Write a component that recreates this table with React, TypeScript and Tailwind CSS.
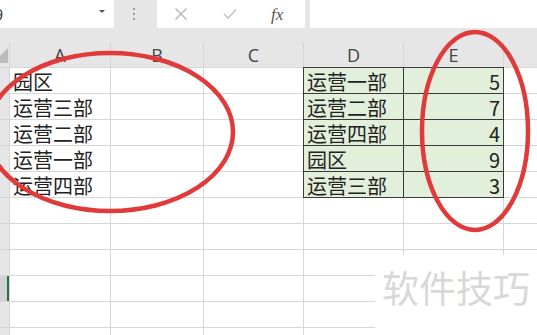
import React from 'react';

const colA = ['园区', '运营三部', '运营二部', '运营一部', '运营四部'];
const tableD: [string, number][] = [
    ['运营一部', 5],
    ['运营二部', 7],
    ['运营四部', 4],
    ['园区', 9],
    ['运营三部', 3],
];
const letters = ['A', 'B', 'C', 'D', 'E', ''];
const cjk = { fontFamily: '"Noto Sans CJK SC", "Noto Sans", sans-serif' };

const FormulaBar: React.FC = () => (
    <div className="flex h-[28px] bg-[#e6e6e6]">
        <div className="relative w-[114px] bg-white overflow-hidden">
            <span className="absolute left-[-6px] top-[3px] text-[16px] text-[#333]" style={{ fontFamily: '"Open Sans", sans-serif' }}>9</span>
            <span className="absolute left-[99px] top-[10px] w-0 h-0 border-l-[3px] border-r-[3px] border-t-[3px] border-l-transparent border-r-transparent border-t-[#555]" />
        </div>
        <div className="w-[43px] flex flex-col items-center justify-center gap-[3px] pr-[4px]">
            <span className="w-[2px] h-[2px] bg-[#9a9a9a]" />
            <span className="w-[2px] h-[2px] bg-[#9a9a9a]" />
            <span className="w-[2px] h-[2px] bg-[#9a9a9a]" />
        </div>
        <div className="w-[148px] bg-white relative">
            <svg className="absolute top-[7px]" style={{ left: 17 }} width="14" height="14" viewBox="0 0 14 14">
                <path d="M1.5 1.5 L12.5 12.5 M12.5 1.5 L1.5 12.5" stroke="#b4b4b4" strokeWidth="1.3" fill="none" />
            </svg>
            <svg className="absolute top-[8px]" style={{ left: 66 }} width="14" height="12" viewBox="0 0 14 12">
                <path d="M1 6 L5 10 L13 1.5" stroke="#c4c4c4" strokeWidth="1.6" fill="none" />
            </svg>
            <span className="absolute top-[2px] left-[114px] text-[17px] italic text-[#555]" style={{ fontFamily: '"Liberation Serif", serif' }}>fx</span>
        </div>
        <div className="w-[5px]" />
        <div className="flex-1 bg-white" />
    </div>
);

const App: React.FC = () => {
    const rows = Array.from({ length: 11 }, (_, i) => i);
    return (
        <div className="relative w-[537px] h-[335px] overflow-hidden bg-white">
            <FormulaBar />
            <div className="h-[14px] bg-[#e6e6e6]" />
            <div className="grid grid-cols-[9px_100px_92px_99px_99px_99px_1fr] grid-rows-[25px] auto-rows-[25px] gap-px bg-[#d6d6d6]">
                {/* header row */}
                <div className="relative bg-[#e6e6e6] overflow-hidden">
                    <svg className="absolute left-0 top-0" width="9" height="25" viewBox="0 0 9 25">
                        <polygon points="8,6 8,21 -7,21" fill="#bcbcbc" />
                    </svg>
                </div>
                {letters.map((l, i) => (
                    <div key={i} className="bg-[#e6e6e6] flex items-end justify-center pb-[1px] text-[18px] leading-[22px] text-[#444]" style={{ fontFamily: '"Open Sans", sans-serif' }}>
                        {l}
                    </div>
                ))}
                {rows.map((r) => (
                    <React.Fragment key={r}>
                        <div className={r === 8 ? 'bg-[#d2d2d2] border-r-2 border-[#217346]' : 'bg-[#e6e6e6]'} />
                        <div className="bg-white flex items-end pl-[3px] text-[20px] leading-[23px] text-[#222]" style={cjk}>
                            {colA[r] ?? ''}
                        </div>
                        <div className="bg-white" />
                        <div className="bg-white" />
                        {r === 0 ? (
                            <div className="col-span-2 row-span-5 -m-px p-px grid grid-cols-[99px_99px] auto-rows-[25px] gap-px bg-[#3a3a3a]">
                                {tableD.map(([name, n]) => (
                                    <React.Fragment key={name}>
                                        <div className="bg-[#e2efda] flex items-end pl-[3px] text-[20px] leading-[23px] text-[#222]" style={cjk}>{name}</div>
                                        <div className="bg-[#e2efda] flex items-end justify-end pr-[3px] text-[20px] leading-[23px] text-[#222]" style={cjk}>{n}</div>
                                    </React.Fragment>
                                ))}
                            </div>
                        ) : r < 5 ? null : (
                            <>
                                <div className="bg-white" />
                                <div className="bg-white" />
                            </>
                        )}
                        <div className="bg-white" />
                    </React.Fragment>
                ))}
            </div>

            <svg className="absolute inset-0 pointer-events-none" width="537" height="335" viewBox="0 0 537 335">
                <ellipse cx="110" cy="132" rx="123" ry="79" fill="none" stroke="#e03a3a" strokeWidth="4.5" />
                <ellipse cx="475" cy="131" rx="53" ry="99" fill="none" stroke="#e03a3a" strokeWidth="4.5" />
            </svg>

            <div className="absolute left-[375px] top-[255px] right-0 bottom-0 bg-white">
                <div className="pl-[7px] pt-[14px] text-[37px] leading-none text-[#d8d8d8]" style={cjk}>软件技巧</div>
            </div>
        </div>
    );
};

export default App;
